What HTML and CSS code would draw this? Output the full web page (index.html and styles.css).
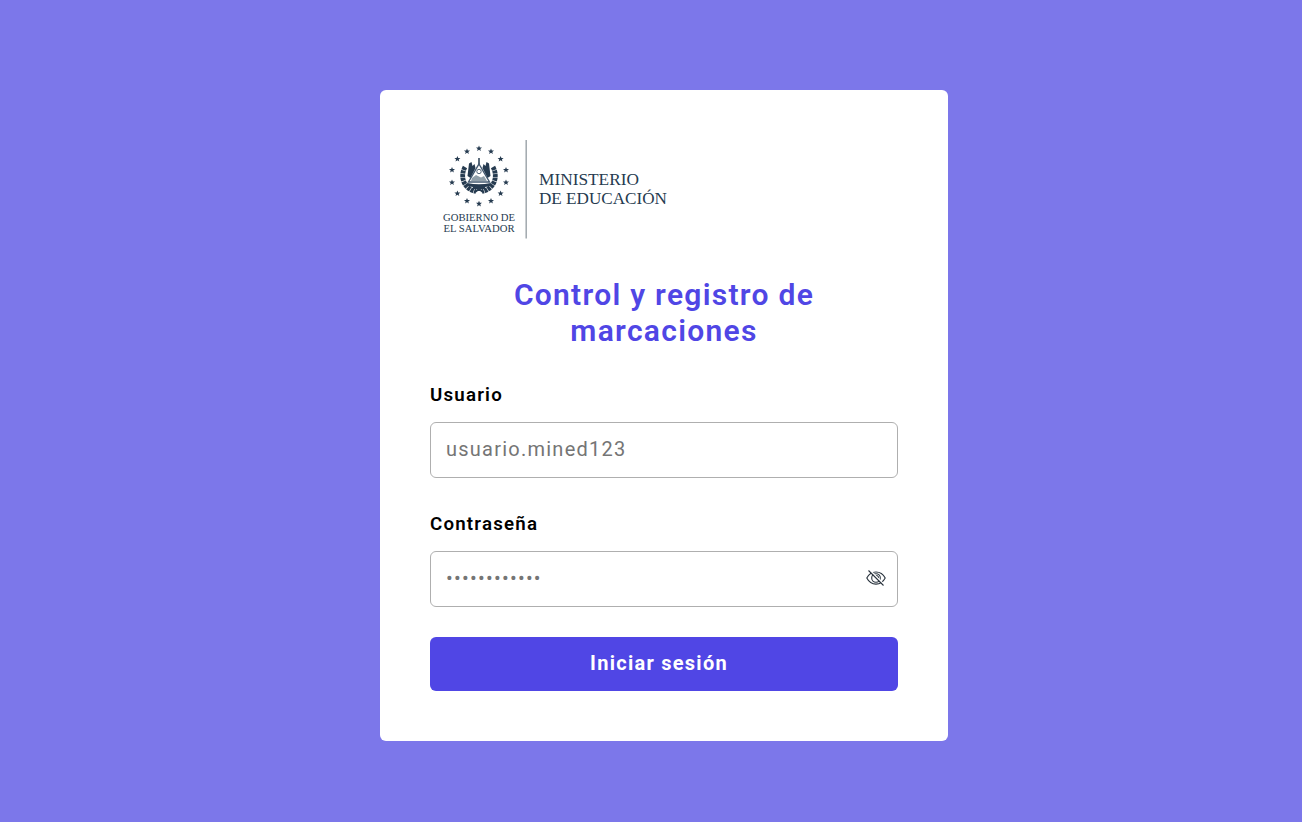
FILE: index.html
```html
<!DOCTYPE html>
<html lang="es">
<head>
<meta charset="utf-8">
<title>Control y registro de marcaciones</title>
<link rel="stylesheet" href="styles.css">
</head>
<body>
<main class="card">
  <svg class="logo" viewBox="430 140 250 99" width="250" height="99" role="img" aria-label="Gobierno de El Salvador, Ministerio de Educación">
    <defs>
      <path id="star" d="M0-3.1L.85-1 3-.95 1.3.45 1.9 2.6 0 1.35-1.9 2.6-1.3.45-3-.95-.85-1Z"/>
    </defs>
    <g fill="#263b50">
      <use href="#star" x="479" y="148.5"/><use href="#star" x="491" y="151.5"/>
      <use href="#star" x="500.6" y="159"/><use href="#star" x="506" y="170"/>
      <use href="#star" x="506" y="182.5"/><use href="#star" x="500.6" y="193.5"/>
      <use href="#star" x="491" y="201"/><use href="#star" x="479" y="203.8"/>
      <use href="#star" x="467" y="201"/><use href="#star" x="457.4" y="193.5"/>
      <use href="#star" x="452" y="182.5"/><use href="#star" x="452" y="170"/>
      <use href="#star" x="457.4" y="159"/><use href="#star" x="467" y="151.5"/>
    </g>
    <!-- laurel branches -->
    <g fill="none" stroke="#263b50" stroke-width="4.800" stroke-dasharray="3.200 .5">
      <path d="M465 167C459.500 177 464 189 476 191.500"/>
      <path d="M493 167C498.500 177 494 189 482 191.500"/>
    </g>
    <!-- flags -->
    <g fill="#263b50">
      <path d="M469 163.500L471.500 162 472.500 166 474.500 164 475.500 168 470.500 178 467.500 176Z"/>
      <path d="M489 163.500L486.500 162 485.500 166 483.500 164 482.500 168 487.500 178 490.500 176Z"/>
    </g>
    <!-- triangle, staff and ribbon -->
    <path d="M479 158V166" stroke="#263b50" stroke-width="1.500"/>
    <path d="M479 164L489.500 182H468.500Z" fill="#fff" stroke="#435970" stroke-width="1.400"/>
    <circle cx="479" cy="171.500" r="2.200" fill="none" stroke="#53677a" stroke-width="1"/>
    <path d="M472 178L476 175 481 177.500 484 176 487 181H471Z" fill="#91a0aa"/>
    <path d="M467 184.500Q479 187 491 184.500" fill="none" stroke="#263b50" stroke-width="3"/>
    <path d="M473 188H485M475 192L479 189 483 192" fill="none" stroke="#263b50" stroke-width="2"/>
    <path d="M526.200 140V238.500" stroke="#a1a8ad" stroke-width="1.500"/>
    <g class="logo-text">
      <text x="443" y="221" font-size="10.500" textLength="72" lengthAdjust="spacingAndGlyphs">GOBIERNO DE</text>
      <text x="443.500" y="232" font-size="10.500" textLength="71" lengthAdjust="spacingAndGlyphs">EL SALVADOR</text>
      <text x="539" y="185" font-size="16.500" textLength="100" lengthAdjust="spacingAndGlyphs">MINISTERIO</text>
      <text x="539" y="204" font-size="16.500" textLength="128" lengthAdjust="spacingAndGlyphs">DE EDUCACIÓN</text>
    </g>
  </svg>
  <h1 class="title">Control y registro de marcaciones</h1>
  <form class="form">
    <div class="field">
      <label class="label" for="user">Usuario</label>
      <div class="control"><input class="input" id="user" type="text" placeholder="usuario.mined123"></div>
    </div>
    <div class="field">
      <label class="label" for="pass">Contraseña</label>
      <div class="control">
        <input class="input" id="pass" type="password" placeholder="••••••••••••">
        <svg class="eye" viewBox="0 0 20 20" width="20" height="20" aria-hidden="true">
          <path d="M.8 10C5 1.900 15 1.900 19.200 10 15 18.100 5 18.100.8 10Z"/>
          <circle cx="10" cy="10" r="4.300"/>
          <path d="M10 7.500A2.500 2.500 0 0 1 12.500 10"/>
          <path class="eye-gap" d="M3.300 1.700L18.300 16.700"/>
          <path d="M2.500 2.500L17.500 17.500"/>
        </svg>
      </div>
    </div>
    <button class="submit" type="button">Iniciar sesión</button>
  </form>
</main>
</body>
</html>
```
FILE: styles.css
```css
* { box-sizing: border-box; }
body {
  margin: 0;
  min-height: 822px;
  padding: 90px 0 81px 26px;
  display: flex;
  justify-content: center;
  align-items: flex-start;
  background: #7c77ea;
  font-family: Roboto, sans-serif;
  letter-spacing: 1px;
}
.card {
  width: 568px;
  height: 651px;
  padding: 50px;
  background: #fff;
  border-radius: 6px;
}
.logo { display: block; }
.logo-text { font-family: "Liberation Serif", serif; fill: #263b50; letter-spacing: 0; }
.title {
  margin: 38px 0 33px;
  padding: 0 60px;
  text-align: center;
  font-size: 30px;
  line-height: 36px;
  font-weight: 600;
  letter-spacing: 1.28px;
  color: #5046e5;
}
.form { display: flex; flex-direction: column; }
.field { margin-bottom: 30px; }
.label {
  display: block;
  height: 40px;
  padding-top: 2px;
  line-height: 22px;
  font-size: 18.72px;
  font-weight: 600;
  letter-spacing: 1.2px;
  color: #000;
}
.field + .field .label { height: 43px; padding-top: 5px; }
.control { display: flex; position: relative; }
.input {
  width: 100%;
  height: 56px;
  padding: 0 50px 2px 15px;
  border: 1px solid #afafaf;
  border-radius: 6px;
  background: #fff;
  font: 400 20px Roboto, sans-serif;
  letter-spacing: 1.24px;
  outline: none;
}
.input::placeholder { color: #757575; opacity: 1; }
.eye {
  position: absolute;
  right: 12px;
  top: 17px;
  fill: none;
  stroke: #29333d;
  stroke-width: 1.1;
}
.eye-gap { stroke: #fff; stroke-width: 1.6; }
.submit {
  height: 54px;
  padding: 0 10px 2px 0;
  border: 0;
  border-radius: 6px;
  background: #5046e5;
  color: #fff;
  font: 700 20px Roboto, sans-serif;
  letter-spacing: 1.26px;
}
```
